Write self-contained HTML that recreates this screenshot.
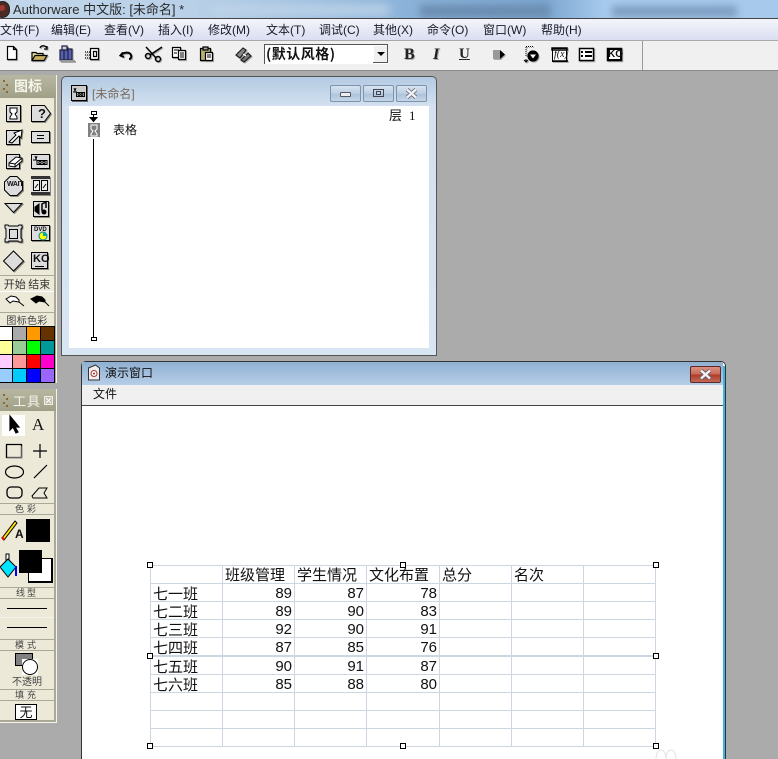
<!DOCTYPE html>
<html><head><meta charset="utf-8">
<style>
html,body{margin:0;padding:0;width:778px;height:759px;overflow:hidden;background:#ababab}
body{position:relative;font-family:"Liberation Sans","WenQuanYi Zen Hei","Noto Sans CJK SC",sans-serif;color:#111}
div,span,svg{position:absolute}
.t{white-space:nowrap;line-height:1}
.m{top:24px;font-size:12px;color:#1a1a2a;white-space:nowrap;line-height:13px}
.cell{font-size:15px;line-height:17px;white-space:nowrap;color:#111;font-family:"WenQuanYi Zen Hei","Noto Sans CJK SC",sans-serif}
.n{font-size:15px;line-height:17px;width:30px;text-align:right;font-family:"Liberation Sans",sans-serif;color:#111}
.lab{background:#ece9d8;font-size:11px;text-align:center;color:#444;line-height:12px;white-space:nowrap;left:0;width:54px;font-family:"WenQuanYi Zen Hei","Noto Sans CJK SC",sans-serif}
.h{width:4px;height:4px;border:1px solid #000;background:#fff}
.btn{width:29px;height:15px;border:1px solid #7d92ad;border-radius:2px;background:linear-gradient(#d7e3f0,#bccfe3 50%,#aec4da 55%,#c5d6e8)}
</style></head><body>

<!-- blurred title bar -->
<div style="left:0;top:0;width:778px;height:18px;overflow:hidden;background:linear-gradient(90deg,#c2d6ea 0,#b8d0e8 25%,#8db4da 50%,#7ca6d0 70%,#a8cbee 78%,#a6c9ec 100%)">
  <div style="left:420px;top:5px;width:130px;height:12px;background:#6a8cb0;filter:blur(4px)"></div>
  <div style="left:612px;top:6px;width:125px;height:11px;background:#7c9cc0;filter:blur(4px)"></div>
  <div style="left:210px;top:5px;width:180px;height:10px;background:#bfd4e8;filter:blur(5px)"></div>
</div>
<div style="left:-5px;top:1px;width:13px;height:15px;border-radius:8px;background:#4a2a22;border:1px solid #222"></div>
<div style="left:-1px;top:5px;width:6px;height:6px;border-radius:3px;background:#a03a30"></div>
<div class="t" style="left:13px;top:2px;font-size:13px;color:#2a2a2a;line-height:15px">Authorware 中文版: [未命名] *</div>

<!-- menu -->
<div style="left:0;top:18px;width:778px;height:1px;background:#444"></div>
<div style="left:0;top:19px;width:778px;height:21px;background:linear-gradient(#f4f5fb,#dadef0)"></div>
<div style="left:0;top:40px;width:778px;height:1px;background:#a9a9a9"></div>
<span class="m" style="left:0">文件(F)</span>
<span class="m" style="left:51px">编辑(E)</span>
<span class="m" style="left:104px">查看(V)</span>
<span class="m" style="left:158px">插入(I)</span>
<span class="m" style="left:208px">修改(M)</span>
<span class="m" style="left:266px">文本(T)</span>
<span class="m" style="left:319px">调试(C)</span>
<span class="m" style="left:373px">其他(X)</span>
<span class="m" style="left:427px">命令(O)</span>
<span class="m" style="left:483px">窗口(W)</span>
<span class="m" style="left:541px">帮助(H)</span>

<!-- toolbar -->
<div style="left:0;top:41px;width:778px;height:29px;background:#f0f0f0"></div>
<div style="left:0;top:70px;width:778px;height:1px;background:#8a8a8a"></div>
<div style="left:642px;top:41px;width:1px;height:29px;background:#999"></div>
<svg style="left:0;top:41px;filter:drop-shadow(1px 1px 0 #aaa)" width="640" height="29" viewBox="0 41 640 29" fill="none" stroke="#000" stroke-width="1.200">
  <!-- new -->
  <path d="M7.500 46.500h6l3 3v10h-9zM13.500 46.500v3h3" fill="#fff"/>
  <!-- open -->
  <path d="M32 60.500v-8h4l1 1h6v7z" fill="#e8d890"/><path d="M32 60.500l3-5h12l-3 5z" fill="#c8b060"/><path d="M40 48c1-3 5-3 7 0M47 46v3h-3" stroke-width="1.300"/>
  <!-- library -->
  <g stroke="#224"><path d="M60 50h4v10h-4zM64 48h4v12h-4zM68 49h4v11h-4z" fill="#5560b0"/><path d="M62 46h5v4h-5z" fill="#ccd"/></g><path d="M60 61h15" stroke="#999" stroke-width="2"/>
  <!-- copy frame -->
  <path d="M90.500 48.500h8v11h-8z" fill="#fff"/><path d="M93.500 51.500h3v5h-3z"/><path d="M85 52h5M85 55h5M85 58h5" stroke-dasharray="1 1"/>
  <!-- undo -->
  <path d="M123 52.500l-2.500 3 3.500 1.500M122 54c3-2 8-2 9 1s-1 4-2 4" stroke-width="2"/>
  <!-- scissors -->
  <path d="M146 47l10 11M162 47l-12 8" stroke-width="1.500"/><circle cx="148" cy="56" r="2.500" stroke-width="1.500"/><circle cx="158" cy="59" r="2.500" stroke-width="1.500"/>
  <!-- copy -->
  <path d="M172.500 47.500h8v10h-8z" fill="#fff"/><path d="M178.500 50.500h7v9h-7z" fill="#fff"/><path d="M174 50h5M174 53h3M180 53h4M180 55h4M180 57h4" stroke-width="1"/>
  <!-- paste -->
  <path d="M200.500 48.500h10v12h-10z" fill="#b8b070"/><path d="M203 47h5v3h-5z" fill="#aaa"/><path d="M205.500 52.500h7v8h-7z" fill="#fff"/><path d="M207 55h4M207 57h4" stroke-width="1"/>
  <!-- style -->
  <path d="M236 55l7-7 3 2-6 8z" fill="#888" stroke="#222"/><path d="M241 60l7-7 3 3-7 6z" fill="#777" stroke="#222"/><path d="M236 52l3-2M243 54l3 2" stroke="#fff"/>
  <!-- arrow -->
  <path d="M493 50h7v9h-7z" fill="#999" stroke="none"/><path d="M500 50l5 4.500-5 4.500z" fill="#000" stroke="none"/>
  <!-- flow -->
  <path d="M526 46.500h8M526 47v10" stroke-dasharray="1 1" stroke-width="1"/><path d="M526 59v3M524 60l2 2 2-2" stroke-width="1"/><circle cx="533" cy="56" r="5" fill="#000"/><path d="M530 54.500h6l-3 4z" fill="#fff" stroke="none"/>
  <!-- fx -->
  <path d="M552.500 48.500h14v13h-14z" fill="#fff" stroke-width="1"/><path d="M552 48h15v2h-15zM553 61h15" stroke-width="1.500"/>
  <!-- list -->
  <path d="M579.500 48.500h14v12h-14z" fill="#fff" stroke-width="1.500"/><path d="M581 52h2M585 52h7M581 56h2M585 56h7" stroke-width="2"/>
  <!-- KO -->
  <path d="M607.500 48.500h14v12h-14z" fill="#000" stroke-width="1.500"/>
  <path d="M609 50h11v9h-11z" fill="#fff" stroke="none"/>
</svg>
<div class="t" style="left:554px;top:49px;font-size:10px;font-style:italic;font-family:'Liberation Serif',serif;line-height:11px">f(x)</div>
<div class="t" style="left:608px;top:49px;font-size:10px;font-weight:bold;line-height:11px">KO</div>
<div class="t" style="left:404px;top:46px;font-size:16px;font-weight:bold;font-family:'Liberation Serif',serif;color:#222;line-height:18px;text-shadow:1px 1px 0 #aaa">B</div>
<div class="t" style="left:433px;top:46px;font-size:16px;font-weight:bold;font-style:italic;font-family:'Liberation Serif',serif;color:#222;line-height:18px;text-shadow:1px 1px 0 #aaa">I</div>
<div class="t" style="left:459px;top:45px;font-size:15px;font-weight:bold;font-family:'Liberation Serif',serif;color:#222;line-height:18px;text-decoration:underline">U</div>
<!-- combo -->
<div style="left:264px;top:44px;width:124px;height:20px;background:#fff;border-top:1px solid #555;border-left:1px solid #555;box-sizing:border-box"></div>
<div class="t" style="left:266px;top:46px;font-size:14px;font-weight:bold;line-height:16px;letter-spacing:.5px;font-family:'WenQuanYi Zen Hei','Noto Sans CJK SC',sans-serif">(默认风格)</div>
<div style="left:373px;top:45px;width:15px;height:18px;background:#f0f0f0;border-right:1px solid #555;border-bottom:1px solid #555;box-sizing:border-box;box-shadow:inset 1px 1px 0 #fff"></div>
<div style="left:377px;top:52px;width:0;height:0;border:4px solid transparent;border-top:4px solid #000;border-bottom:0"></div>

<!-- Icon palette -->
<div style="left:0;top:75px;width:57px;height:308px;background:#f5f3e8"></div>
<div style="left:0;top:75px;width:56px;height:23px;background:linear-gradient(#b8b8a2,#a0a088)"></div>
<div style="left:0;top:98px;width:54px;height:285px;background:#ece9d8"></div>
<div style="left:54px;top:98px;width:2px;height:285px;background:#aaa996"></div>
<div class="t" style="left:14px;top:78px;font-size:14px;font-weight:bold;color:#f4f4ea;line-height:16px;font-family:'WenQuanYi Zen Hei','Noto Sans CJK SC',sans-serif">图标</div>
<svg style="left:1px;top:78px" width="8" height="18"><path d="M2 2h2v2h-2zM5 6h2v2h-2zM2 10h2v2h-2zM5 13h2v2h-2z" fill="#8a6a2a"/></svg>

<svg style="left:0;top:98px;filter:drop-shadow(1px 1px 0 #8a8a80)" width="56" height="186" viewBox="0 98 56 186" fill="none" stroke="#000">
  <!-- display -->
  <path d="M6.500 105.500h14v16h-14z" fill="#ddd"/><path d="M10 108h7v4l-2 2 2 3v2h-7v-2l2-3-2-2z" fill="#fff"/>
  <!-- decision -->
  <path d="M31.500 105.500h13l6 8-6 8h-13z" fill="#ddd"/>
  <!-- motion -->
  <path d="M6.500 130.500h13v14h-13z" fill="#ddd"/><path d="M9 142l7-7-2-2 8-3-1 8-2-2-7 7z" fill="#fff"/>
  <!-- calc -->
  <path d="M31.500 131.500h18v11h-18z" fill="#ddd"/><path d="M37 135.500h7M37 138.500h7"/>
  <!-- erase -->
  <path d="M6.500 154.500h13v14h-13z" fill="#ddd"/><path d="M9 163l7-6 6 1v3l-7 6-6-1z" fill="#fff"/><path d="M9 163l6 1 7-6M15 164v3"/>
  <!-- navigate -->
  <path d="M31.500 154.500h18v14h-18z" fill="#ddd"/><path d="M35 156l1 3 1-3M33 160h4"/><path d="M37 160.500h10v4h-10z"/><circle cx="40" cy="162.500" r="1.200"/><circle cx="44" cy="162.500" r="1.200"/>
  <!-- wait -->
  <path d="M10 176.500h7l5.500 5.500v8l-5.500 5.500h-7l-5.500-5.500v-8z" fill="#ddd"/>
  <!-- movie -->
  <path d="M31 176h19v19h-19z" fill="#333" stroke="none"/><path d="M31 179h19v13h-19z" fill="#ddd" stroke="none"/><path d="M33.500 180.500h6v10h-6zM41.500 180.500h6v10h-6z" fill="#eee"/><path d="M35 188l3-4M43 188l3-4"/>
  <!-- triangle -->
  <path d="M5 203.500h17l-8.500 9z" fill="#ddd"/>
  <!-- sound -->
  <path d="M33.500 201.500h15v15h-15z" fill="#ddd"/><path d="M35 207l4-3v10l-4-3z" fill="#000"/><path d="M42 211v-7l4-2v6" stroke-width="1.500"/><circle cx="44" cy="212" r="2" fill="#000"/>
  <!-- frame -->
  <path d="M5 225h3l1 1h9l1-1h3v3l-1 1v9l1 1v3h-3l-1-1h-9l-1 1h-3v-3l1-1v-9l-1-1z" fill="#ddd"/><path d="M9.500 229.500h8v9h-8z" fill="#ddd"/>
  <!-- dvd -->
  <path d="M31.500 225.500h18v15h-18z" fill="#ddd"/><circle cx="43" cy="236" r="4" fill="#ff0" stroke="#088"/><path d="M43 232a4 4 0 0 1 4 4h-4z" fill="#0aa" stroke="none"/>
  <!-- diamond -->
  <path d="M13.500 251l10 10-10 10-10-10z" fill="#ddd"/>
  <!-- KO -->
  <path d="M31.500 252.500h16v16h-16z" fill="#ddd"/><path d="M35 266.500h9"/>
</svg>
<div class="t" style="left:7px;top:181px;font-size:7px;font-weight:bold;line-height:8px;letter-spacing:-.3px">WAIT</div>
<div class="t" style="left:38px;top:107px;font-size:13px;font-weight:bold;line-height:13px">?</div>
<div class="t" style="left:34px;top:227px;font-size:6px;font-weight:bold;line-height:7px">DVD</div>
<div class="t" style="left:33px;top:254px;font-size:11px;font-weight:bold;line-height:11px">KO</div>

<div style="left:0;top:275px;width:54px;height:1px;background:#aaa996"></div>
<div class="lab" style="top:277px;height:14px;line-height:14px;font-size:11px;color:#333">开始 结束</div>
<div style="left:0;top:291px;width:54px;height:1px;background:#fff"></div>
<svg style="left:0;top:292px" width="54" height="20" fill="none" stroke="#000">
  <path d="M6 7l5-3 5 1 3 3v2l-6-1-3 2z" fill="#fff"/><path d="M19 10l5 4"/>
  <path d="M31 7l6-3 5 1 3 3v2l-6-1-3 2z" fill="#000"/><path d="M45 10l4 4"/>
</svg>
<div style="left:0;top:312px;width:54px;height:1px;background:#aaa996"></div>
<div class="lab" style="top:314px;height:12px;font-size:10px;letter-spacing:.3px">图标色彩</div>
<svg style="left:0;top:326px" width="55" height="57" shape-rendering="crispEdges">
  <rect width="55" height="57" fill="#000"/>
  <rect x="0" y="1" width="12" height="13" fill="#fff"/><rect x="13" y="1" width="13" height="13" fill="#aaa"/><rect x="27" y="1" width="13" height="13" fill="#ff9900"/><rect x="41" y="1" width="13" height="13" fill="#663300"/>
  <rect x="0" y="15" width="12" height="13" fill="#ffff99"/><rect x="13" y="15" width="13" height="13" fill="#99cc99"/><rect x="27" y="15" width="13" height="13" fill="#00ff00"/><rect x="41" y="15" width="13" height="13" fill="#009999"/>
  <rect x="0" y="29" width="12" height="13" fill="#ffccff"/><rect x="13" y="29" width="13" height="13" fill="#ff9999"/><rect x="27" y="29" width="13" height="13" fill="#ff0000"/><rect x="41" y="29" width="13" height="13" fill="#ff00cc"/>
  <rect x="0" y="43" width="12" height="13" fill="#99ccff"/><rect x="13" y="43" width="13" height="13" fill="#00ccff"/><rect x="27" y="43" width="13" height="13" fill="#0000ff"/><rect x="41" y="43" width="13" height="13" fill="#9966ff"/>
</svg>

<!-- Tools palette -->
<div style="left:0;top:389px;width:57px;height:334px;background:#f5f3e8"></div>
<div style="left:0;top:389px;width:56px;height:22px;background:linear-gradient(#b8b8a2,#a0a088)"></div>
<div style="left:0;top:411px;width:54px;height:311px;background:#ece9d8"></div>
<div style="left:54px;top:411px;width:2px;height:311px;background:#aaa996"></div>
<div style="left:0;top:720px;width:56px;height:2px;background:#aaa996"></div>
<div class="t" style="left:13px;top:393px;font-size:13px;color:#f4f4ea;line-height:15px;letter-spacing:1px;font-family:'WenQuanYi Zen Hei','Noto Sans CJK SC',sans-serif">工具</div>
<svg style="left:1px;top:392px" width="8" height="18"><path d="M2 2h2v2h-2zM5 6h2v2h-2zM2 10h2v2h-2zM5 13h2v2h-2z" fill="#8a6a2a"/></svg>
<div style="left:44px;top:396px;width:7px;height:7px;border:1px solid #eee;background:#c0c0a8"></div>
<svg style="left:44px;top:396px" width="9" height="9"><path d="M2 2l5 5M7 2l-5 5" stroke="#fff"/></svg>

<div style="left:2px;top:415px;width:23px;height:21px;background:#fff"></div>
<svg style="left:0;top:411px" width="56" height="95" viewBox="0 411 56 95" fill="none" stroke="#000" stroke-width="1.200">
  <path d="M10 416l0 14 3-3 3 6 2-1-3-5h4z" fill="#000"/>
  <path d="M6.500 444.500h15v13h-15z" stroke-width="1.300"/><path d="M22 446v12h-15" stroke="#999"/>
  <path d="M40 444v14M33 451h14"/>
  <ellipse cx="14.500" cy="472" rx="9" ry="6"/>
  <path d="M34 478l13-13"/>
  <rect x="7" y="487" width="15" height="11" rx="4" stroke-width="1.300"/>
  <path d="M32 496l7-8h8l-3 5 3 5h-14z" stroke-width="1"/>
</svg>
<div class="t" style="left:32px;top:416px;font-size:17px;font-family:'Liberation Serif',serif;line-height:18px">A</div>

<div style="left:0;top:503px;width:54px;height:1px;background:#aaa996"></div>
<div class="lab" style="top:504px;height:10px;font-size:9px;letter-spacing:3px;line-height:10px">色彩</div>
<div style="left:0;top:514px;width:54px;height:1px;background:#aaa996"></div>
<svg style="left:0;top:516px" width="18" height="25"><path d="M2 22l13-17 2 2-13 17z" fill="#ffe000" stroke="#000"/><path d="M2 21l2 3" stroke="#d00" stroke-width="2"/></svg>
<div class="t" style="left:15px;top:527px;font-size:12px;font-weight:bold;line-height:14px">A</div>
<div style="left:26px;top:519px;width:24px;height:23px;background:#000"></div>
<svg style="left:0;top:552px" width="20" height="28"><path d="M6 2h3v6h-3z" fill="#fff" stroke="#000"/><path d="M8 7l8 8-8 10-8-10z" fill="#00e5ff" stroke="#000"/><path d="M16 14v10" stroke="#00f" stroke-width="2"/></svg>
<div style="left:28px;top:558px;width:22px;height:22px;background:#fff;border:1px solid #000;border-right-width:2px;border-bottom-width:2px"></div>
<div style="left:19px;top:550px;width:23px;height:23px;background:#000"></div>

<div style="left:0;top:587px;width:54px;height:1px;background:#aaa996"></div>
<div class="lab" style="top:588px;height:10px;font-size:9px;letter-spacing:2px;line-height:10px">线型</div>
<div style="left:0;top:598px;width:54px;height:1px;background:#aaa996"></div>
<div style="left:7px;top:608px;width:40px;height:1px;background:#000"></div>
<div style="left:0;top:617px;width:54px;height:1px;background:#f6f4ea"></div>
<div style="left:7px;top:627px;width:40px;height:1px;background:#000"></div>
<div style="left:0;top:639px;width:54px;height:1px;background:#aaa996"></div>
<div class="lab" style="top:640px;height:10px;font-size:9px;letter-spacing:3px;line-height:10px">模式</div>
<div style="left:0;top:650px;width:54px;height:1px;background:#aaa996"></div>
<div style="left:15px;top:653px;width:16px;height:11px;background:#808080;border:1px solid #000"></div>
<div style="left:22px;top:659px;width:16px;height:16px;background:#fff"></div>
<div style="left:22px;top:659px;width:14px;height:14px;border-radius:8px;background:#fff;border:1px solid #000"></div>
<div class="lab" style="top:675px;height:11px;font-size:10px;background:none;line-height:11px">不透明</div>
<div style="left:0;top:689px;width:54px;height:1px;background:#aaa996"></div>
<div class="lab" style="top:690px;height:10px;font-size:9px;letter-spacing:3px;line-height:10px">填充</div>
<div style="left:0;top:700px;width:54px;height:1px;background:#aaa996"></div>
<div style="left:15px;top:704px;width:20px;height:14px;background:#fff;border:1px solid #000;font-size:13px;line-height:14px;text-align:center;font-family:'WenQuanYi Zen Hei','Noto Sans CJK SC',sans-serif">无</div>

<!-- Flow window -->
<div style="left:61px;top:76px;width:376px;height:280px;box-sizing:border-box;border:1px solid #555;border-radius:5px 5px 0 0;background:linear-gradient(#b4cbe2 0,#d3e1f0 30px,#d8e5f2 100%)"></div>
<div style="left:69px;top:106px;width:360px;height:242px;background:#fff"></div>
<div style="left:71px;top:85px;width:14px;height:14px;border:1px solid #000;background:#ccc;box-shadow:1px 1px 0 #666"></div>
<svg style="left:72px;top:86px" width="14" height="14" fill="none" stroke="#000"><path d="M2 2l1 3 1-3M1 6h4"/><path d="M4.500 6.500h8v4h-8z"/><circle cx="7" cy="8.500" r="1"/><circle cx="10" cy="8.500" r="1"/></svg>
<div class="t" style="left:92px;top:87px;font-size:12px;line-height:14px;color:#7a6c5c">[未命名]</div>
<div class="btn" style="left:330px;top:85px"></div>
<div class="btn" style="left:363px;top:85px"></div>
<div class="btn" style="left:396px;top:85px"></div>
<div style="left:340px;top:92px;width:9px;height:3px;border:1px solid #556;background:#eee;border-radius:1px"></div>
<div style="left:373px;top:89px;width:9px;height:6px;border:1px solid #445"></div>
<div style="left:376px;top:91px;width:3px;height:2px;border:1px solid #445"></div>
<svg style="left:405px;top:88px" width="13" height="11"><path d="M2 1.500l9 8M11 1.500l-9 8" stroke="#667" stroke-width="4"/><path d="M2 1.500l9 8M11 1.500l-9 8" stroke="#f2f4f8" stroke-width="2.500"/></svg>

<div class="t" style="left:389px;top:108px;font-size:13px;line-height:15px">层</div>
<div class="t" style="left:409px;top:108px;font-size:13px;line-height:15px;font-family:'Liberation Serif',serif">1</div>
<svg style="left:85px;top:108px" width="18" height="235" fill="none" stroke="#000">
  <path d="M6.500 3.500h5v3h-5zM8.500 7v7"/><path d="M5 9.500h7l-3.500 4z" fill="#000"/>
  <rect x="3" y="15" width="12" height="14" fill="#808080" stroke="none"/>
  <path d="M6 17h6v4l-2 2 2 3v2h-6v-2l2-3-2-2z" stroke="#fff" fill="none"/>
  <path d="M8.500 31v198"/>
  <path d="M6.500 229.500h5v3h-5z" fill="#fff"/>
</svg>
<div class="t" style="left:113px;top:123px;font-size:12px;line-height:14px;color:#111">表格</div>

<!-- Demo window -->
<div style="left:81px;top:361px;width:645px;height:398px;box-sizing:border-box;border:1px solid #333;border-bottom:0;border-radius:5px 5px 0 0;background:#fff"></div>
<div style="left:723px;top:366px;width:2px;height:393px;background:#3cb4e0"></div>
<div style="left:82px;top:362px;width:641px;height:23px;background:linear-gradient(#90b0d2,#b6cee7)"></div>
<div style="left:82px;top:385px;width:641px;height:20px;background:#f0f0f0"></div>
<div style="left:82px;top:405px;width:641px;height:1px;background:#444"></div>
<svg style="left:86px;top:364px" width="16" height="18" fill="none"><path d="M2.500 4l7-3 4 3v12h-11z" fill="#eee" stroke="#333"/><circle cx="8" cy="9.500" r="3" fill="#fff" stroke="#a33"/><circle cx="8" cy="9.500" r="1" fill="#b22"/></svg>
<div class="t" style="left:105px;top:366px;font-size:12px;line-height:15px;color:#111">演示窗口</div>
<div class="t" style="left:93px;top:387px;font-size:12px;line-height:14px;color:#111">文件</div>
<div style="left:690px;top:366px;width:29px;height:15px;border:1px solid #5a2a2a;border-radius:2px;background:linear-gradient(#dd9080,#c86a58 48%,#b03a28 52%,#c06a58)"></div>
<svg style="left:699px;top:369px" width="13" height="11"><path d="M2 1.500l9 8M11 1.500l-9 8" stroke="#556" stroke-width="4"/><path d="M2 1.500l9 8M11 1.500l-9 8" stroke="#f2f2f4" stroke-width="2.500"/></svg>

<!-- Table -->
<svg style="left:0;top:0" width="778" height="759" shape-rendering="crispEdges" stroke="#ced6e4" fill="none">
  <path d="M150.500 565v182M222.500 565v182M294.500 565v182M366.500 565v182M439.500 565v182M511.500 565v182M583.500 565v182M655.500 565v182"/>
  <path d="M150 565.500h506M150 583.500h506M150 601.500h506M150 619.500h506M150 637.500h506M150 674.500h506M150 692.500h506M150 710.500h506M150 728.500h506M150 746.500h506"/>
  <path d="M150 656h506" stroke-width="2"/>
</svg>
<div class="cell" style="left:225px;top:566px">班级管理</div>
<div class="cell" style="left:297px;top:566px">学生情况</div>
<div class="cell" style="left:369px;top:566px">文化布置</div>
<div class="cell" style="left:442px;top:566px">总分</div>
<div class="cell" style="left:514px;top:566px">名次</div>
<div class="cell" style="left:153px;top:585px">七一班</div>
<div class="cell" style="left:153px;top:603px">七二班</div>
<div class="cell" style="left:153px;top:621px">七三班</div>
<div class="cell" style="left:153px;top:639px">七四班</div>
<div class="cell" style="left:153px;top:658px">七五班</div>
<div class="cell" style="left:153px;top:676px">七六班</div>

<div class="n" style="left:262px;top:585px">89</div><div class="n" style="left:334px;top:585px">87</div><div class="n" style="left:407px;top:585px">78</div>
<div class="n" style="left:262px;top:603px">89</div><div class="n" style="left:334px;top:603px">90</div><div class="n" style="left:407px;top:603px">83</div>
<div class="n" style="left:262px;top:621px">92</div><div class="n" style="left:334px;top:621px">90</div><div class="n" style="left:407px;top:621px">91</div>
<div class="n" style="left:262px;top:639px">87</div><div class="n" style="left:334px;top:639px">85</div><div class="n" style="left:407px;top:639px">76</div>
<div class="n" style="left:262px;top:658px">90</div><div class="n" style="left:334px;top:658px">91</div><div class="n" style="left:407px;top:658px">87</div>
<div class="n" style="left:262px;top:676px">85</div><div class="n" style="left:334px;top:676px">88</div><div class="n" style="left:407px;top:676px">80</div>

<div class="h" style="left:147px;top:562px"></div>
<div class="h" style="left:400px;top:562px"></div>
<div class="h" style="left:653px;top:562px"></div>
<div class="h" style="left:147px;top:653px"></div>
<div class="h" style="left:653px;top:653px"></div>
<div class="h" style="left:147px;top:743px"></div>
<div class="h" style="left:400px;top:743px"></div>
<div class="h" style="left:653px;top:743px"></div>
<svg style="left:650px;top:748px" width="30" height="11" fill="none" stroke="#e2e2e2"><path d="M6 11c0-12 10-12 10 0M16 11c0-12 10-12 10 0"/></svg>
</body></html>
